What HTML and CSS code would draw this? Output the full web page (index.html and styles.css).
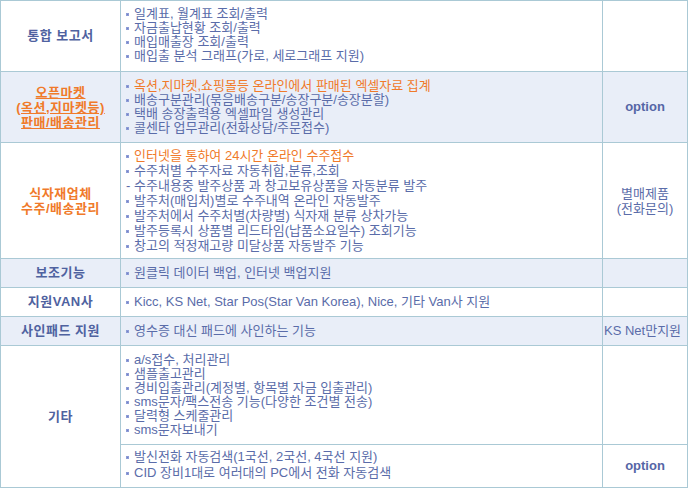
FILE: index.html
```html
<!DOCTYPE html>
<html lang="ko">
<head>
<meta charset="utf-8">
<title>기능 안내</title>
<link rel="stylesheet" href="styles.css">
</head>
<body>
<table class="spec">
  <colgroup><col class="c1"><col class="c2"><col class="c3"></colgroup>
  <tr class="row r1">
    <th class="cat">통합 보고서</th>
    <td class="items pb"><ul>
      <li>일계표, 월계표 조회/출력</li>
      <li>자금출납현황 조회/출력</li>
      <li>매입매출장 조회/출력</li>
      <li>매입출 분석 그래프(가로, 세로그래프 지원)</li>
    </ul></td>
    <td class="opt"></td>
  </tr>
  <tr class="row r2 alt">
    <th class="cat orange lh15"><a class="link" href="#">오픈마켓<br>(옥션,지마켓등)<br>판매/배송관리</a></th>
    <td class="items"><ul>
      <li class="hl">옥션,지마켓,쇼핑몰등 온라인에서 판매된 엑셀자료 집계</li>
      <li>배송구분관리(묶음배송구분/송장구분/송장분할)</li>
      <li>택배 송장출력용 엑셀파일 생성관리</li>
      <li>콜센타 업무관리(전화상담/주문접수)</li>
    </ul></td>
    <td class="opt strong">option</td>
  </tr>
  <tr class="row r3">
    <th class="cat orange lh15">식자재업체<br>수주/배송관리</th>
    <td class="items lh15"><ul>
      <li class="hl">인터넷을 통하여 24시간 온라인 수주접수</li>
      <li>수주처별 수주자료 자동취합,분류,조회</li>
      <li class="dash">수주내용중 발주상품 과 창고보유상품을 자동분류 발주</li>
      <li>발주처(매입처)별로 수주내역 온라인 자동발주</li>
      <li>발주처에서 수주처별(차량별) 식자재 분류 상차가능</li>
      <li>발주등록시 상품별 리드타임(납품소요일수) 조회기능</li>
      <li>창고의 적정재고량 미달상품 자동발주 기능</li>
    </ul></td>
    <td class="opt lh15">별매제품<br>(전화문의)</td>
  </tr>
  <tr class="row r4 alt">
    <th class="cat">보조기능</th>
    <td class="items"><ul><li>원클릭 데이터 백업, 인터넷 백업지원</li></ul></td>
    <td class="opt"></td>
  </tr>
  <tr class="row r5">
    <th class="cat">지원VAN사</th>
    <td class="items"><ul><li>Kicc, KS Net, Star Pos(Star Van Korea), Nice, 기타 Van사 지원</li></ul></td>
    <td class="opt"></td>
  </tr>
  <tr class="row r6 alt">
    <th class="cat">사인패드 지원</th>
    <td class="items"><ul><li>영수증 대신 패드에 사인하는 기능</li></ul></td>
    <td class="opt left">KS Net만지원</td>
  </tr>
  <tr class="row r7">
    <th class="cat" rowspan="2">기타</th>
    <td class="items"><ul>
      <li>a/s접수, 처리관리</li>
      <li>샘플출고관리</li>
      <li>경비입출관리(계정별, 항목별 자금 입출관리)</li>
      <li>sms문자/팩스전송 기능(다양한 조건별 전송)</li>
      <li>달력형 스케줄관리</li>
      <li>sms문자보내기</li>
    </ul></td>
    <td class="opt"></td>
  </tr>
  <tr class="row r8">
    <td class="items lh16 pb"><ul>
      <li>발신전화 자동검색(1국선, 2국선, 4국선 지원)</li>
      <li>CID 장비1대로 여러대의 PC에서 전화 자동검색</li>
    </ul></td>
    <td class="opt strong">option</td>
  </tr>
</table>
</body>
</html>
```

FILE: styles.css
```css
html, body {
  margin: 0;
  padding: 0;
  background: #ffffff;
}

.spec {
  border-collapse: collapse;
  table-layout: fixed;
  width: 688px;
  font-family: "Liberation Sans", "Noto Sans CJK KR", sans-serif;
  font-size: 13px;
  line-height: 14px;
  color: #5a6ca9;
}

.c1 { width: 120px; }
.c3 { width: 85px; }

.spec th,
.spec td {
  border: 1px solid #aac9d5;
  padding: 0;
  vertical-align: middle;
}

.r1 { height: 71px; }
.r2 { height: 71px; }
.r3 { height: 116px; }
.r4, .r5, .r6 { height: 29px; }
.r7 { height: 99px; }
.r8 { height: 43px; }

.alt th,
.alt td {
  background: #e9eef8;
}

.cat {
  text-align: center;
  font-weight: bold;
  color: #4f62a0;
  letter-spacing: 0.5px;
}

.cat.orange {
  color: #f07a2a;
}

.link {
  color: #f07a2a;
  text-decoration: underline;
}

.lh15 { line-height: 15px; }
.lh16 { line-height: 16px; }
.pb { padding-bottom: 3px !important; }

.items ul {
  list-style: none;
  margin: 0;
  padding: 0 0 0 5px;
}

.items li {
  display: flex;
  align-items: center;
  white-space: nowrap;
}

.items li::before {
  content: "";
  flex: none;
  width: 3px;
  height: 3px;
  margin-right: 5px;
  margin-top: 1px;
  background: #7181c6;
  box-shadow: inset 0 0 0 1px #8d9bd6;
}

.items li.dash::before {
  content: "-";
  width: 8px;
  height: auto;
  margin-right: 0;
  margin-top: 0;
  background: none;
  box-shadow: none;
}

.items li.hl {
  color: #f07a2a;
}

.opt {
  text-align: center;
}

.opt.strong {
  font-weight: bold;
  color: #5566a6;
}

.opt.left {
  text-align: left;
  padding-left: 1px;
  white-space: nowrap;
}
```
